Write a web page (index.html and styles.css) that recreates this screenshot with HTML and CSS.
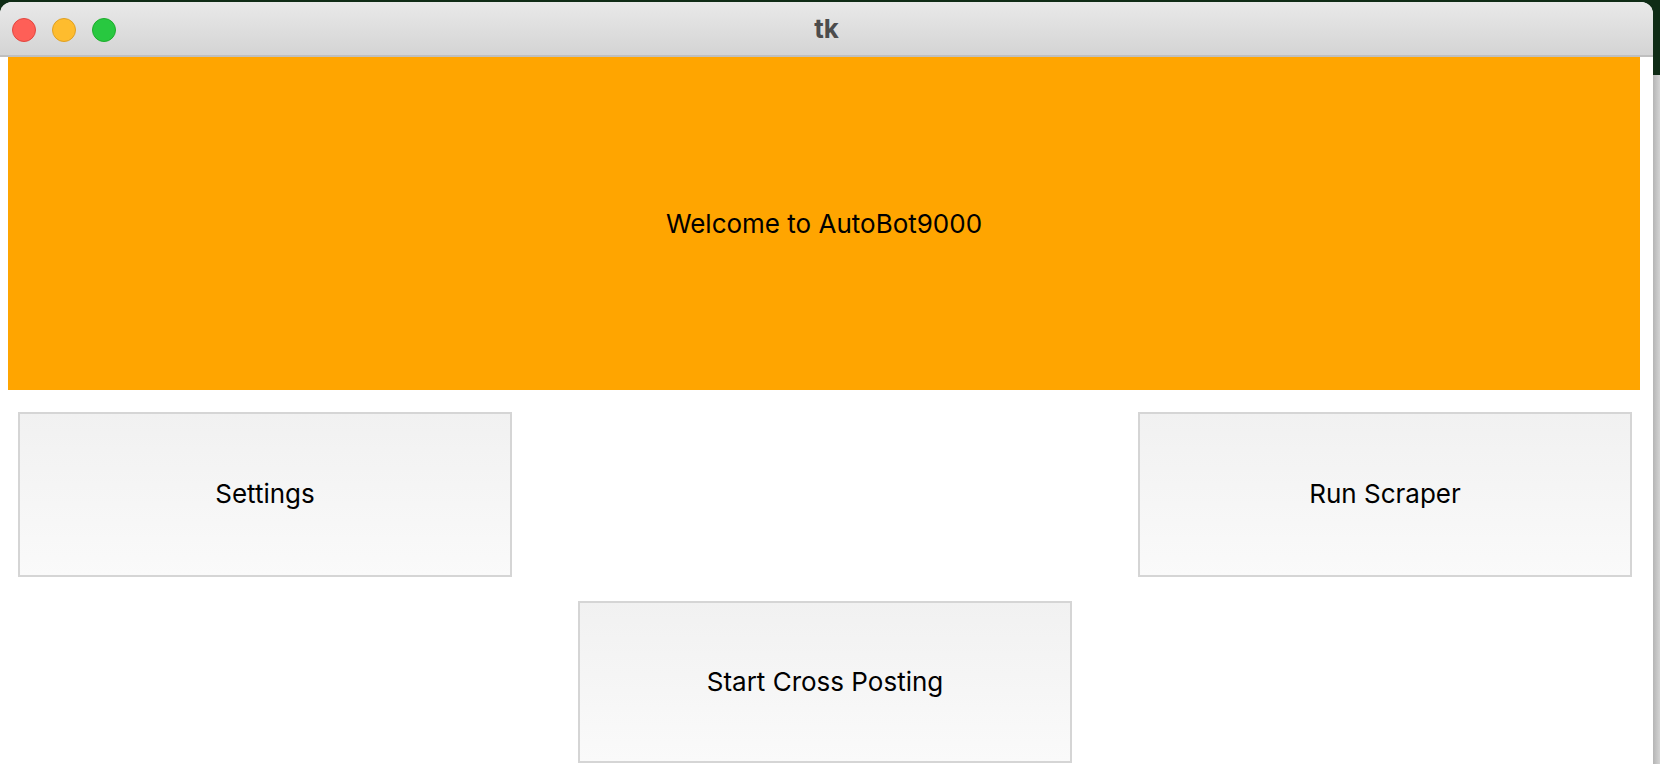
FILE: index.html
```html
<!DOCTYPE html>
<html>
<head>
<meta charset="utf-8">
<title>tk</title>
<link rel="stylesheet" href="styles.css">
</head>
<body>
<div class="desktop">
  <div class="window">
    <div class="titlebar">
      <div class="lights">
        <span class="light red"></span>
        <span class="light yellow"></span>
        <span class="light green"></span>
      </div>
      <div class="title">tk</div>
      <div class="spacer"></div>
    </div>
    <div class="content">
      <div class="banner">Welcome to AutoBot9000</div>
      <div class="row row-top">
        <button class="btn">Settings</button>
        <button class="btn">Run Scraper</button>
      </div>
      <div class="row row-bottom">
        <button class="btn btn-short">Start Cross Posting</button>
      </div>
    </div>
  </div>
  <div class="side">
    <div class="side-top"></div>
    <div class="side-bottom"></div>
  </div>
</div>
</body>
</html>
```

FILE: styles.css
```css
html, body {
  margin: 0;
  padding: 0;
  width: 1660px;
  height: 764px;
  overflow: hidden;
  background: #0f2c16;
  font-family: Inter, "Noto Sans", "Liberation Sans", sans-serif;
}

.desktop {
  display: flex;
  width: 1660px;
  height: 764px;
}

.window {
  width: 1653px;
  height: 762px;
  margin-top: 2px;
  background: #ffffff;
  border-radius: 12px 12px 0 0;
  overflow: hidden;
  flex: none;
}

.titlebar {
  height: 53px;
  border-bottom: 2px solid #bfbfbf;
  background: linear-gradient(#e9e9e9, #d4d4d4);
  display: grid;
  grid-template-columns: 1fr auto 1fr;
  align-items: center;
}

.lights {
  display: flex;
  gap: 16px;
  padding-left: 12px;
  margin-top: 3px;
}

.light {
  width: 22px;
  height: 22px;
  border-radius: 50%;
  display: block;
}

.red { background: #fe5f57; border: 1px solid #e2463f; }
.yellow { background: #febc2e; border: 1px solid #dfa023; }
.green { background: #28c840; border: 1px solid #1dad2b; }

.title {
  font-weight: 700;
  font-size: 26px;
  color: #4c4c4c;
  line-height: 1;
  margin-top: 1px;
}

.content {
  padding: 0 13px 0 8px;
}

.banner {
  height: 333px;
  background: #ffa500;
  display: flex;
  align-items: center;
  justify-content: center;
  font-size: 26px;
  color: #000;
}

.row {
  display: flex;
}

.row-top {
  margin-top: 22px;
  justify-content: space-between;
  padding: 0 8px 0 10px;
}

.row-bottom {
  margin-top: 24px;
  justify-content: center;
  padding-left: 2px;
}

.btn {
  width: 494px;
  height: 165px;
  border: 2px solid #d5d5d5;
  background: linear-gradient(#f1f1f1, #fafafa);
  font-family: inherit;
  font-size: 26px;
  color: #000;
  padding: 0 0 2px 0;
  margin: 0;
}

.btn-short {
  height: 162px;
}

.side {
  flex: 1;
  display: flex;
  flex-direction: column;
}

.side-top {
  height: 75px;
  background: #0f2c16;
}

.side-bottom {
  flex: 1;
  background: linear-gradient(90deg, #b5b5b5, #d4d4d4);
}
```
